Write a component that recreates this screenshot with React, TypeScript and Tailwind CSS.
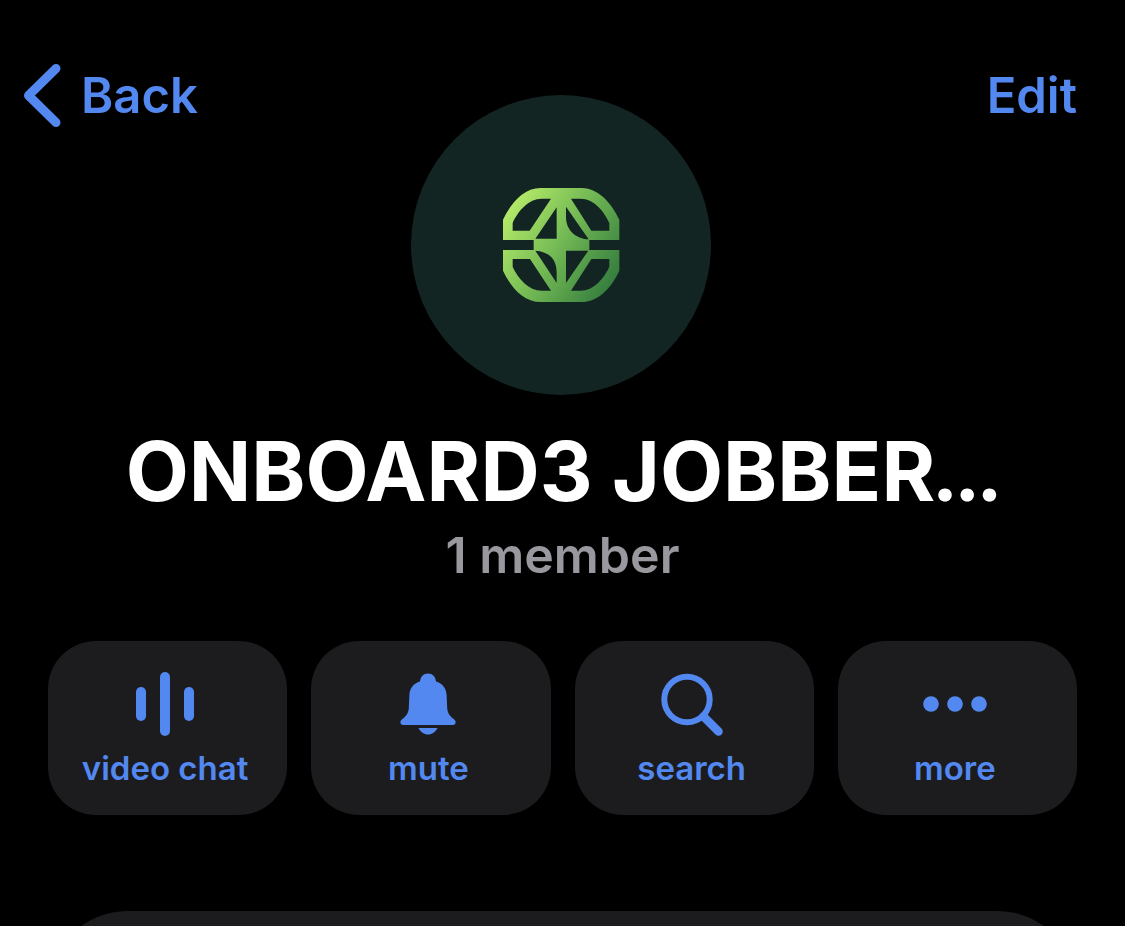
import type { ReactNode } from "react";

function GroupLogo() {
  return (
    <svg viewBox="0 0 426 420" className="h-[140px] w-[142px]" aria-hidden="true">
      <defs>
        <linearGradient id="logo" gradientUnits="userSpaceOnUse" x1="50" y1="110" x2="370" y2="310">
          <stop offset="0" stopColor="#b4ea68" />
          <stop offset="0.5" stopColor="#72b854" />
          <stop offset="1" stopColor="#37803f" />
        </linearGradient>
      </defs>
      <path
        fill="url(#logo)"
        fillRule="evenodd"
        d="M39 195V134C60 90 98 39 152 39H275C329 39 367 90 388 134V195H298V225H388V287C367 332 329 381 275 381H152C98 381 60 332 39 287V225H131V195Z
        M68 167V144C84 108 116 71 155 71H183L119 167Z
        M200 97V191H136Z
        M228 95L296 193C254 190 228 164 228 125Z
        M243 71H272C311 71 342 108 358 144V167H304Z
        M68 252H120L183 347H155C116 347 84 310 68 275Z
        M136 227C180 230 200 256 200 292V324Z
        M228 227H295L228 324Z
        M304 252H358V275C342 310 311 347 272 347H243Z"
      />
    </svg>
  );
}

function VideoChatIcon() {
  return (
    <svg viewBox="0 0 64 64" className="size-16" fill="currentColor" aria-hidden="true">
      <rect x="3" y="15" width="10" height="34" rx="5" />
      <rect x="27" y="0" width="10" height="64" rx="5" />
      <rect x="51" y="15" width="10" height="34" rx="5" />
    </svg>
  );
}

function BellIcon() {
  return (
    <svg viewBox="0 0 64 64" className="size-16" fill="currentColor" aria-hidden="true">
      <path d="M24 9.500C24.500 4.500 27.500 1.500 32 1.500S39.500 4.500 40 9.500C46.500 11.500 50.300 16 50.600 23L51.200 36C51.500 41 53.500 43.500 57 46.500C59.500 48.500 60 49.500 59.500 51C59 52.500 58 53 56.500 53H7.500C6 53 5 52.500 4.500 51C4 49.500 4.500 48.500 7 46.500C10.500 43.500 12.500 41 12.800 36L13.400 23C13.700 16 17.500 11.500 24 9.500Z" />
      <path d="M22.500 56H41.500C39.500 60 36 62.500 32 62.500S24.500 60 22.500 56Z" />
    </svg>
  );
}

function SearchIcon() {
  return (
    <svg viewBox="0 0 64 64" className="size-16" fill="none" stroke="currentColor" aria-hidden="true">
      <circle cx="27" cy="27.500" r="22.700" strokeWidth="6" />
      <path d="M43.500 44.500L58.500 59.500" strokeWidth="8.500" strokeLinecap="round" />
    </svg>
  );
}

function MoreIcon() {
  return (
    <svg viewBox="0 0 64 64" className="size-16" fill="currentColor" aria-hidden="true">
      <circle cx="8" cy="32" r="7.800" />
      <circle cx="32" cy="32" r="7.800" />
      <circle cx="56" cy="32" r="7.800" />
    </svg>
  );
}

function Action({ label, children }: { label: string; children: ReactNode }) {
  return (
    <button
      type="button"
      className="flex flex-col items-center gap-3 rounded-[48px] bg-[#1c1c1e] pt-[31px] pr-[5px] pb-[27px] text-[33px] leading-10 font-semibold"
    >
      {children}
      <span>{label}</span>
    </button>
  );
}

export default function App() {
  return (
    <main className="flex h-screen flex-col overflow-hidden bg-black font-['Inter',sans-serif] text-[#5288f0]">
      <header className="grid grid-cols-[1fr_auto_1fr] items-start pt-16 pr-7 pl-6">
        <a href="#back" className="flex items-center gap-5 justify-self-start text-[49px] leading-[63px] font-semibold">
          <svg viewBox="0 0 37 63" className="h-[63px] w-[37px]" fill="none" stroke="currentColor" strokeWidth="9" strokeLinecap="round" strokeLinejoin="round" aria-hidden="true">
            <path d="M32 4.500L4.500 31.500L32 58.500" />
          </svg>
          Back
        </a>
        <div className="mt-[31px] flex size-[300px] items-center justify-center rounded-full bg-[#132523]">
          <GroupLogo />
        </div>
        <button type="button" className="mr-5 justify-self-end text-[49px] leading-[63px] font-semibold">
          Edit
        </button>
      </header>

      <section className="mt-7 flex shrink-0 flex-col items-center text-center">
        <h1 className="text-[82px] leading-[98px] font-bold text-white">
          ONBOARD3 JOBBER<span className="font-['Lato',sans-serif] leading-none font-black">…</span>
        </h1>
        <p className="text-[50px] leading-[68px] font-semibold text-[#98989e]">1 member</p>
      </section>

      <nav aria-label="Group actions" className="mt-[52px] grid shrink-0 grid-cols-4 gap-6 px-12">
        <Action label="video chat"><VideoChatIcon /></Action>
        <Action label="mute"><BellIcon /></Action>
        <Action label="search"><SearchIcon /></Action>
        <Action label="more"><MoreIcon /></Action>
      </nav>

      <section className="mx-12 mt-24 min-h-40 shrink-0 grow rounded-t-[80px] bg-[#1c1c1e]" />
    </main>
  );
}
